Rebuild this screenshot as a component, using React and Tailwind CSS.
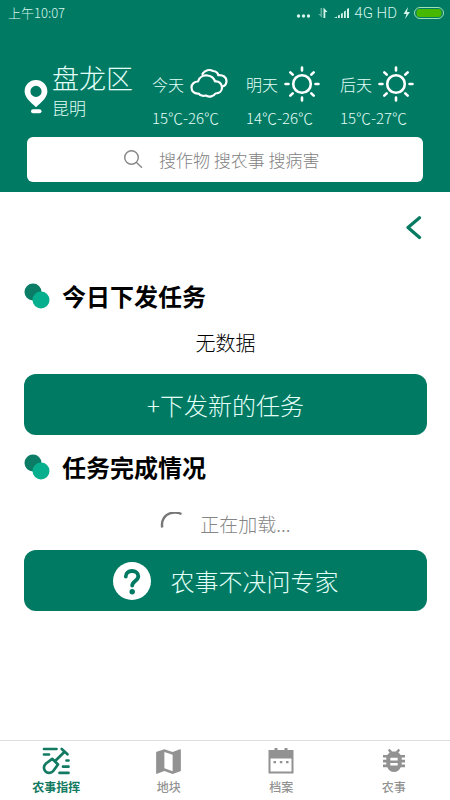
import React, { useState } from "react";
import { MdMap } from "react-icons/md";

const weather = [
  { day: "今天", icon: "cloud", temp: "15℃-26℃" },
  { day: "明天", icon: "sun", temp: "14℃-26℃" },
  { day: "后天", icon: "sun", temp: "15℃-27℃" },
];

const tabs = [
  { id: "command", label: "农事指挥", Icon: ShovelIcon },
  { id: "plots", label: "地块", Icon: PlotIcon },
  { id: "files", label: "档案", Icon: CalendarIcon },
  { id: "farming", label: "农事", Icon: BugIcon },
];

function PinIcon() {
  return (
    <svg viewBox="0 0 24 34" className="w-6 h-[34px] shrink-0">
      <path
        fill="#fff"
        fillRule="evenodd"
        d="M12 0C5.6 0 .6 4.9.6 11.2c0 6 5.9 11 11.4 16 5.5-5 11.4-10 11.4-16C23.4 4.9 18.4 0 12 0Zm0 5.8a5.6 5.6 0 1 1 0 11.2 5.6 5.6 0 0 1 0-11.2Z"
      />
      <rect x="7" y="29.2" width="10.5" height="4" rx="2" fill="#fff" />
    </svg>
  );
}

function CloudIcon() {
  return (
    <svg
      viewBox="0 0 38 32"
      className="w-[38px] h-8"
      fill="none"
      stroke="#fff"
      strokeWidth="2.2"
      strokeLinecap="round"
      strokeLinejoin="round"
    >
      <path d="M8 13.5C9.500 8.500 14 7 17.500 7.500c4 .5 6.500 2.500 7.500 6 4-.5 7 2 7 6 0 3.500-2.500 6-6.500 6-2 3-6 4-9.500 2-3.500 1-6 0-7.500-2-4 .5-7-2-7-6 0-3.500 3-6 6.500-6Z" />
      <path d="M12.500 6c2.500-4 7-5 10.500-3 3 .3 4.800 2 5.300 4.200 4.700-.4 8.200 2 8.200 5.800 0 2.800-1.500 4.800-4 5.500" />
    </svg>
  );
}

function SunIcon() {
  return (
    <svg
      viewBox="0 0 36 36"
      className="w-9 h-9"
      fill="none"
      stroke="#fff"
      strokeWidth="2.6"
      strokeLinecap="round"
    >
      <circle cx="18" cy="18" r="8.8" />
      <path d="M18 1.500v3M18 31.500v3M1.500 18h3M31.500 18h3M6.300 6.300l2.400 2.400M27.300 27.300l2.400 2.400M6.300 29.700l2.400-2.400M27.300 8.700l2.400-2.400" />
    </svg>
  );
}

function ShovelIcon() {
  return (
    <svg
      viewBox="0 0 28 28"
      className="w-7 h-7"
      fill="none"
      stroke="currentColor"
      strokeWidth="2.7"
      strokeLinecap="round"
      strokeLinejoin="round"
    >
      <path d="M2 2h12.500M2 7.500h5M24.500 13.500h2M21 19.700h5.500M17.500 25.900h9" />
      <path d="M19.700 2l5.800 5.300M22.600 4.800l-9.200 9" />
      <path d="M10.200 11.800l5.800 5.700-4.600 6.300c-2.400 2.600-5.900 2.800-8 .5-2.100-2.200-1.900-5.600.6-7.800l6.200-4.700Z" />
    </svg>
  );
}

function PlotIcon() {
  return <MdMap className="w-[33px] h-[33px]" />;
}

function BugIcon() {
  return (
    <svg viewBox="0 0 24 26" className="w-6 h-[26px]">
      <path
        fill="currentColor"
        fillRule="evenodd"
        d="M5.800 2.300L7.500.8l2.700 2.700h3.600L16.500.8l1.700 1.500-1.900 2.200c1 .7 1.800 1.500 2.400 2.500H23v2.600h-3.300v2.200H23v2.600h-3.300v2.200H23v2.600h-4.300c-1.200 3-3.700 4.800-6.700 4.800s-5.500-1.800-6.700-4.800H1v-2.600h3.300v-2.200H1v-2.600h3.300V9.600H1V7h4.300c.6-1 1.400-1.800 2.400-2.500L5.800 2.300ZM8.300 9.800v2.600h7.400V9.800H8.300Zm0 5.200v2.600h7.400V15H8.300Z"
      />
    </svg>
  );
}

function CalendarIcon() {
  return (
    <svg viewBox="0 0 26 26" className="w-[26px] h-[26px]">
      <path
        fill="currentColor"
        fillRule="evenodd"
        d="M6.500 0h3v2h7V0h3v2h6v23.500H.5V2h6V0ZM2.500 10.500v13h21v-13h-21Z"
      />
      <path
        fill="currentColor"
        d="M5.500 13H8v2.300H5.500zM11.800 13h2.500v2.300h-2.500zM18 13h2.500v2.300H18z"
      />
    </svg>
  );
}

function StatusBar() {
  return (
    <div className="flex items-center justify-between h-[26px] pl-2 pr-[6px] text-[13px] text-[#d5f5ec]">
      <span>上午10:07</span>
      <div className="flex items-center">
        <svg viewBox="0 0 54 14" className="w-[54px] h-[14px]" fill="#d5f5ec">
          <circle cx="2.500" cy="10" r="1.700" />
          <circle cx="7.500" cy="10" r="1.700" />
          <circle cx="12.500" cy="10" r="1.700" />
          <path opacity=".45" d="M24.500 2h1.700v10l-4-4h2.300z" />
          <path d="M27.500 12V1.500l4 4.500h-2.200v6z" />
          <path d="M38 12l3-1.500V12zM42 12V9.500l1.800-.8V12zM45 12V7.800l1.800-1V12zM48 12V5.500l1.800-1V12zM51 12V3l2-1v10z" />
        </svg>
        <span className="ml-1 font-[Roboto] text-[15px]">4G HD</span>
        <svg viewBox="0 0 42 14" className="ml-[5px] w-[42px] h-[14px]">
          <path fill="#d5f5ec" d="M6 1L1.500 8h3L3 13l5-7H5z" />
          <rect
            x="12.500"
            y="1.500"
            width="29"
            height="11"
            rx="5.500"
            fill="none"
            stroke="#9fe3b0"
          />
          <rect x="14.500" y="3" width="25" height="8" rx="3" fill="#47b800" />
        </svg>
      </div>
    </div>
  );
}

function SectionTitle({ children }) {
  return (
    <div className="flex items-center h-9 gap-3">
      <svg viewBox="0 0 26 26" className="w-[26px] h-[26px]">
        <circle cx="9" cy="9" r="8.5" fill="#0b7c65" />
        <circle cx="17" cy="17" r="8.5" fill="#06b08f" />
      </svg>
      <h2 className="text-2xl leading-8 font-bold text-black">{children}</h2>
    </div>
  );
}

export default function App() {
  const [activeTab, setActiveTab] = useState("command");
  const [keyword, setKeyword] = useState("");

  return (
    <div
      lang="zh-CN"
      className="min-h-screen flex flex-col bg-white font-['Noto_Sans_CJK_SC',sans-serif] font-light"
    >
      <header className="bg-[#007a63] text-[#e4fff8] pb-[10px]">
        <StatusBar />
        {/*Ubicacion y tiempo de los tres dias*/}
        <div className="flex items-start pl-6 pr-4 pt-9">
          <div className="flex flex-1 items-start gap-1">
            <div className="pt-[18px]">
              <PinIcon />
            </div>
            <div>
              <h1 className="text-[27px] leading-8">盘龙区</h1>
              <p className="text-[17px] leading-7">昆明</p>
            </div>
          </div>
          <div className="flex">
            {weather.map((item) => (
              <div key={item.day} className="w-[94px]">
                <div className="flex items-center h-11 gap-[6px] text-base">
                  <span>{item.day}</span>
                  {item.icon === "cloud" ? <CloudIcon /> : <SunIcon />}
                </div>
                <p className="text-[15px] leading-6">{item.temp}</p>
              </div>
            ))}
          </div>
        </div>
        {/*Buscador*/}
        <label className="mx-[27px] mt-[7px] flex h-[45px] items-center justify-center gap-4 rounded-md bg-white">
          <svg
            viewBox="0 0 20 20"
            className="w-5 h-5"
            fill="none"
            stroke="#8a8a8a"
            strokeWidth="1.5"
            strokeLinecap="round"
          >
            <circle cx="8.5" cy="7.5" r="6.8" />
            <path d="M13.500 12.500l5 4.800" />
          </svg>
          <input
            type="text"
            aria-label="搜索"
            value={keyword}
            onChange={(e) => setKeyword(e.target.value)}
            placeholder="搜作物 搜农事 搜病害"
            className="w-[168px] text-[17px] text-gray-700 outline-none placeholder:text-[#828282]"
          />
        </label>
      </header>

      <main className="flex-1 pl-6 pr-[23px]">
        <div className="flex justify-end h-[86px] pt-6">
          <button aria-label="返回" className="h-6 mr-[3px]">
            <svg
              viewBox="0 0 20 24"
              className="w-5 h-6"
              fill="none"
              stroke="#087a62"
              strokeWidth="3.2"
              strokeLinecap="round"
              strokeLinejoin="round"
            >
              <path d="M15.500 1.800L4 11.500l11.500 10" />
            </svg>
          </button>
        </div>

        <SectionTitle>今日下发任务</SectionTitle>
        <p className="h-[60px] pt-[13px] text-center text-xl leading-8 text-black">
          无数据
        </p>
        <button className="w-full h-[61px] rounded-xl bg-[#007a63] text-2xl text-[#e4fff8]">
          +下发新的任务
        </button>

        <div className="mt-[14px]">
          <SectionTitle>任务完成情况</SectionTitle>
        </div>
        <div className="flex items-center justify-center h-[65px] pt-[14px] gap-[14px] text-[19px] text-[#858585]">
          <svg
            viewBox="0 0 26 26"
            className="w-[26px] h-[26px]"
            fill="none"
            stroke="#777"
            strokeWidth="2.4"
          >
            <path d="M2.200 15.500C1 8.500 4.500 3 10.500 1.200c4-1 7.500-.7 11 .8" />
          </svg>
          <span>正在加载...</span>
        </div>
        <button className="flex w-full h-[61px] items-center justify-center gap-5 rounded-xl bg-[#007a63] text-2xl text-[#e4fff8]">
          <svg viewBox="0 0 38 38" className="w-[38px] h-[38px]">
            <circle cx="19" cy="19" r="19" fill="#fff" />
            <path
              d="M12.800 14.500c0-3.500 2.600-5.500 6.200-5.500s6.300 2 6.300 5.300c0 4.600-6.100 4.700-6.100 9.200"
              fill="none"
              stroke="#007a63"
              strokeWidth="3.8"
              strokeLinecap="round"
            />
            <circle cx="19.200" cy="29.700" r="2.700" fill="#007a63" />
          </svg>
          农事不决问专家
        </button>
      </main>

      {/*Barra inferior*/}
      <nav className="grid grid-cols-4 h-[60px] border-t border-[#dedede]">
        {tabs.map(({ id, label, Icon }) => (
          <button
            key={id}
            onClick={() => setActiveTab(id)}
            className={
              activeTab === id
                ? "flex flex-col items-center pt-1 text-xs font-bold text-[#127a60]"
                : "flex flex-col items-center pt-1 text-xs font-medium text-[#929292]"
            }
          >
            <span className="flex items-center justify-center h-8">
              <Icon />
            </span>
            <span className="leading-5">{label}</span>
          </button>
        ))}
      </nav>
    </div>
  );
}
